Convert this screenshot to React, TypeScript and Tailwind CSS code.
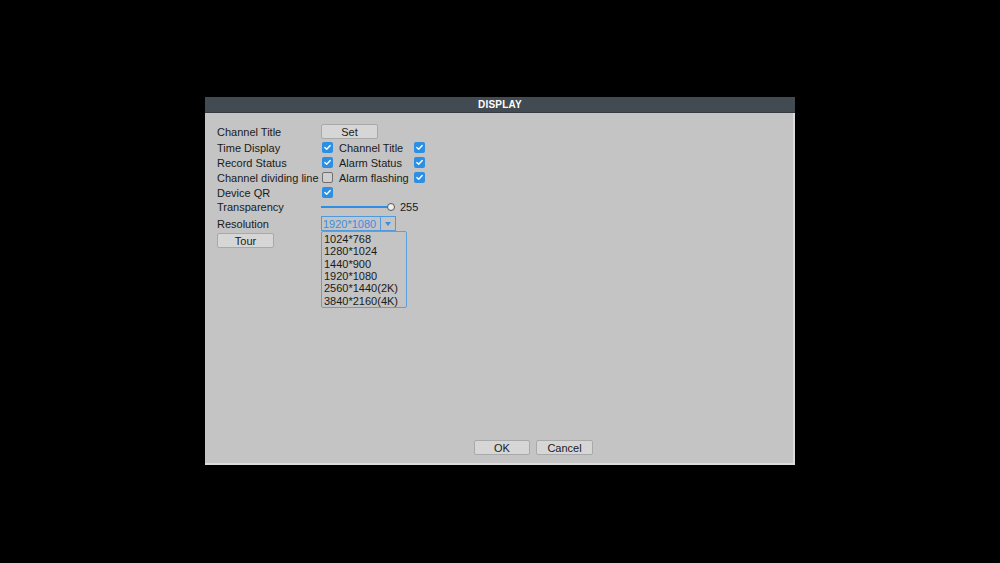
import React from "react";

const font = { fontFamily: '"Liberation Sans", Arial, sans-serif' };

function Check({ on }: { on: boolean }) {
  if (!on)
    return (
      <div className="w-[11px] h-[11px] shrink-0 rounded-[2px] border border-[#6f6f6f] bg-[#cfcfcf]" />
    );
  return (
    <div className="w-[11px] h-[11px] shrink-0 rounded-[2px] bg-[#2d8fe3] flex items-center justify-center">
      <svg width="9" height="9" viewBox="0 0 9 9">
        <path d="M1.8 4.6 L3.7 6.3 L7.2 2.6" stroke="white" strokeWidth="1.4" fill="none" strokeLinecap="round" strokeLinejoin="round" />
      </svg>
    </div>
  );
}

function Btn({ label, w }: { label: string; w: string }) {
  return (
    <div
      className={`${w} h-[15px] shrink-0 rounded-[2px] border border-[#a9a9a9] bg-[#d6d6d6] flex items-center justify-center text-[11px] text-[#1a1a1a] leading-none whitespace-nowrap pt-[1px]`}
    >
      {label}
    </div>
  );
}

export default function App() {
  const items = ["1024*768", "1280*1024", "1440*900", "1920*1080", "2560*1440(2K)", "3840*2160(4K)"];
  return (
    <div className="w-[1000px] h-[563px] bg-black pt-[97px] pl-[205px]" style={font}>
      <div className="w-[590px] h-[368px] flex flex-col">
        <div className="h-[16px] bg-[#434b52] border-b border-[#353b40] flex items-center justify-center text-white text-[10px] font-bold leading-none tracking-[0.2px] pt-[1px]">
          DISPLAY
        </div>
        <div className="flex-1 bg-[#c4c4c4] border-r-[2px] border-b-[2px] border-[#dcdcdc] relative text-[11px] text-[#1a1a1a] leading-none whitespace-nowrap">
          <div className="pl-[12px] pt-[11px] flex flex-col">
            <div className="h-[15px] flex items-center">
              <div className="w-[104px] shrink-0 pt-[2px]">Channel Title</div>
              <Btn label="Set" w="w-[57px]" />
            </div>
            <div className="h-[16px] flex items-center pt-[1px]">
              <div className="w-[105px] shrink-0 pt-[1px]">Time Display</div>
              <Check on />
              <div className="w-[81px] shrink-0 pl-[6px] pt-[1px]">Channel Title</div>
              <Check on />
            </div>
            <div className="h-[15px] flex items-center">
              <div className="w-[105px] shrink-0 pt-[2px]">Record Status</div>
              <Check on />
              <div className="w-[81px] shrink-0 pl-[6px] pt-[2px]">Alarm Status</div>
              <Check on />
            </div>
            <div className="h-[15px] flex items-center">
              <div className="w-[105px] shrink-0 pt-[2px]">Channel dividing line</div>
              <Check on={false} />
              <div className="w-[81px] shrink-0 pl-[6px] pt-[2px]">Alarm flashing</div>
              <Check on />
            </div>
            <div className="h-[14px] flex items-center">
              <div className="w-[105px] shrink-0 pt-[2px]">Device QR</div>
              <Check on />
            </div>
            <div className="h-[15px] flex items-center">
              <div className="w-[104px] shrink-0 pt-[2px]">Transparency</div>
              <div className="w-[66px] h-[2px] bg-[#2d8fe3]" />
              <div className="w-[8px] h-[8px] rounded-full border border-[#555] bg-[#eeeeee]" />
              <div className="pl-[5px] pt-[1px]">255</div>
            </div>
            <div className="h-[17px] mt-[1px] flex items-center relative">
              <div className="w-[104px] shrink-0 pt-[2px]">Resolution</div>
              <div className="w-[75px] h-[15px] border border-[#4e9ae0] flex">
                <div className="flex-1 text-[#3a8ee0] pl-[1px] pt-[1px] flex items-center">1920*1080</div>
                <div className="w-[15px] border-l border-[#4e9ae0] flex items-center justify-center">
                  <svg width="6" height="4" viewBox="0 0 6 4">
                    <path d="M0 0 L6 0 L3 4 Z" fill="#3a8ee0" />
                  </svg>
                </div>
              </div>
              <div className="absolute left-[104px] top-[16px] w-[86px] h-[77px] border border-[#5aa0e0] rounded-[2px] bg-[#c4c4c4] flex flex-col pt-[1px] z-10">
                {items.map((t) => (
                  <div key={t} className="h-[12.5px] flex items-center pl-[2px] pt-[1px]">
                    {t}
                  </div>
                ))}
              </div>
            </div>
            <div className="h-[17px] flex items-center">
              <Btn label="Tour" w="w-[57px]" />
            </div>
          </div>
          <div className="absolute left-[269px] top-[327px] flex gap-[6px]">
            <Btn label="OK" w="w-[56px]" />
            <Btn label="Cancel" w="w-[57px]" />
          </div>
        </div>
      </div>
    </div>
  );
}
